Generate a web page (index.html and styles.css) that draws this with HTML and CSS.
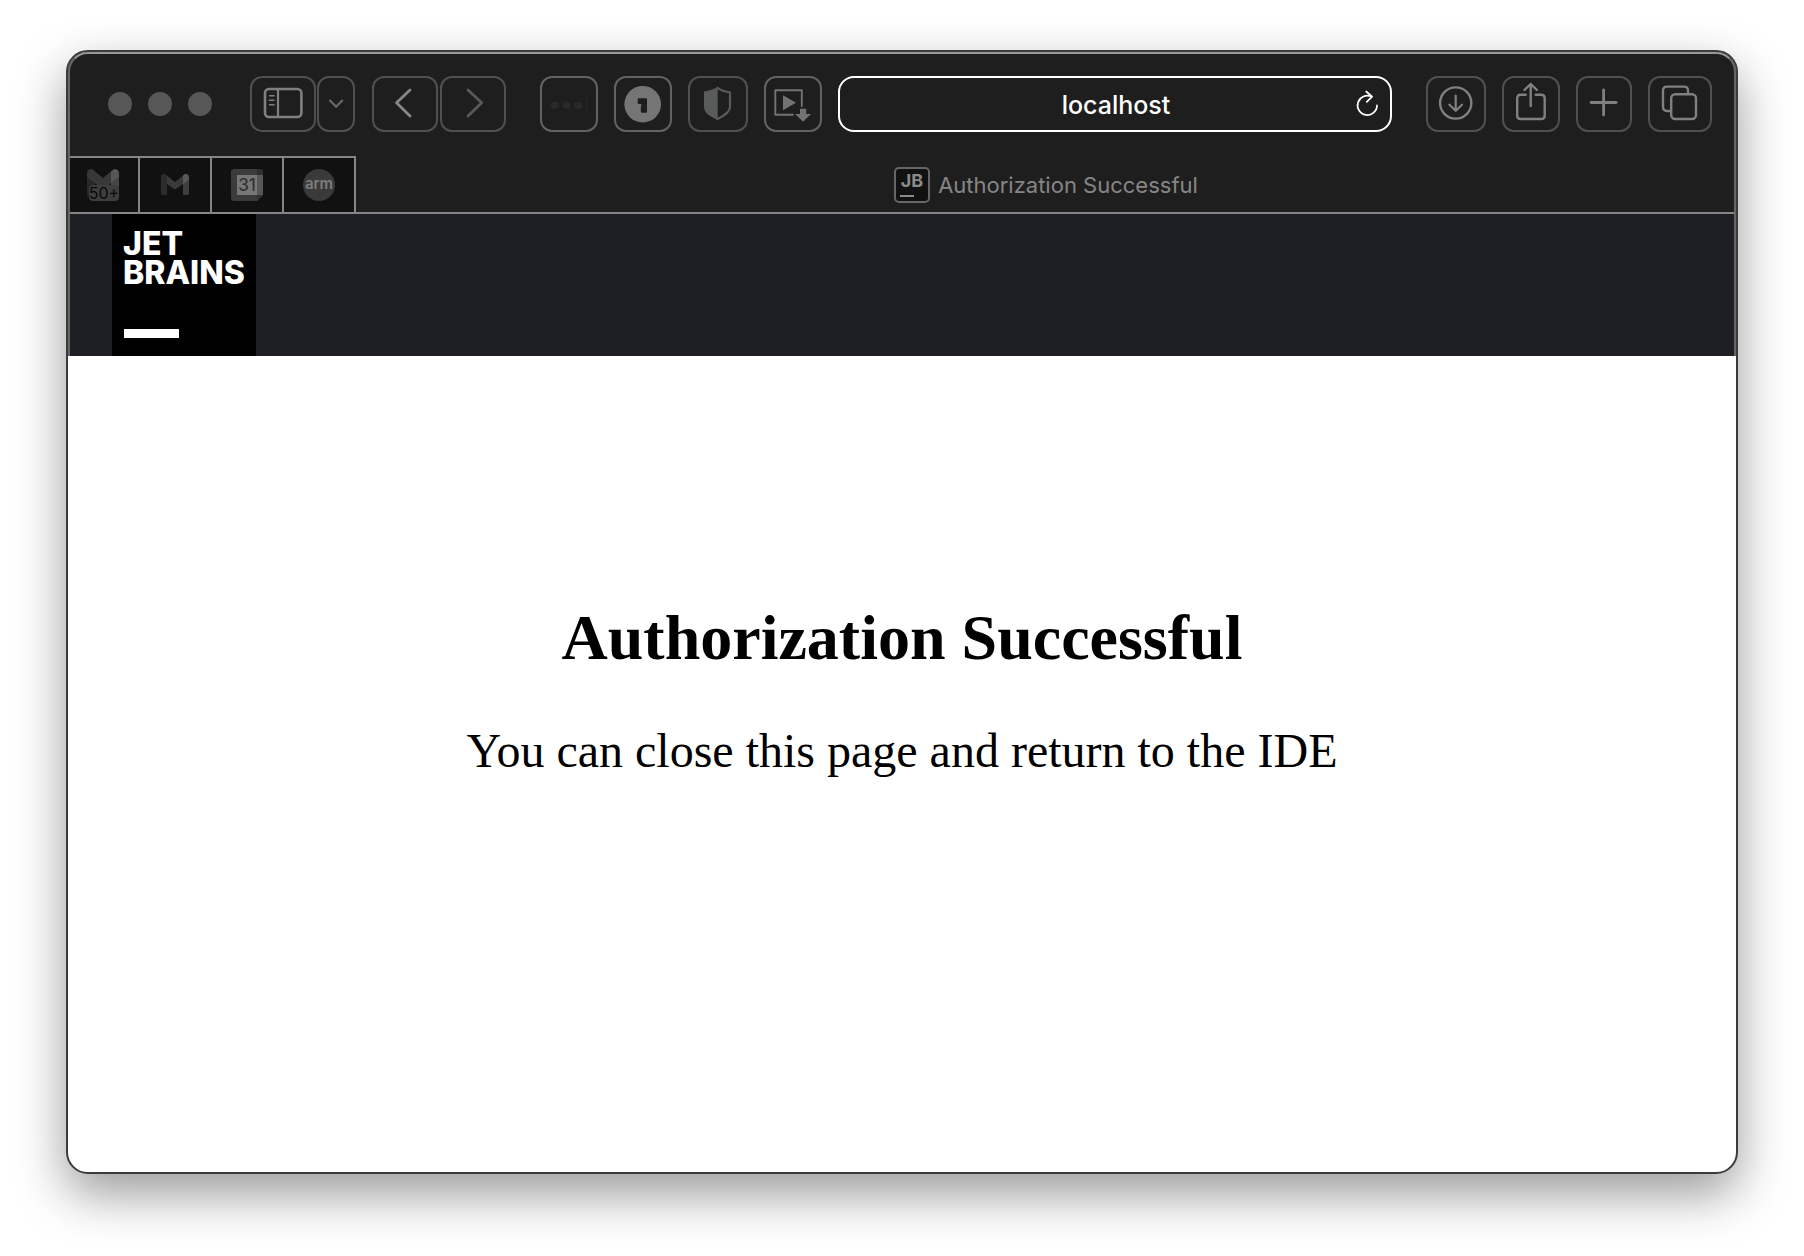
FILE: index.html
```html
<!DOCTYPE html>
<html lang="en">
<head>
<meta charset="utf-8">
<title>Authorization Successful</title>
<link rel="stylesheet" href="styles.css">
</head>
<body>
<div class="window">
  <div class="chrome">
    <div class="toolbar">
      <div class="lights"><span class="light"></span><span class="light"></span><span class="light"></span></div>
      <div class="group group-tight">
        <button class="tool w66" aria-label="Show sidebar"><svg viewBox="2 2 62 52"><rect x="15" y="13" width="36.4" height="28" rx="4" stroke-width="2.6"/><path d="M28 13v28" stroke-width="2.2"/><path d="M19.5 19.7h4.5M19.5 24.2h4.5M19.5 28.7h4.5" stroke-width="1.6"/></svg></button>
        <button class="tool w38" aria-label="Sidebar options"><svg viewBox="2 2 34 52"><path d="M13 24.6l6.1 6.2 6.1-6.2" stroke="#696969" stroke-width="2.2"/></svg></button>
      </div>
      <div class="group group-nav">
        <button class="tool w66" aria-label="Back"><svg viewBox="2 2 62 52"><path d="M38 14L24.5 26.7 38 40" stroke="#878787" stroke-width="2.8"/></svg></button>
        <button class="tool w66" aria-label="Forward"><svg viewBox="2 2 62 52"><path d="M28 14l13.7 12.7L28 40" stroke="#595959" stroke-width="2.8"/></svg></button>
      </div>
      <div class="group group-ext">
        <button class="tool w58 strong" aria-label="Password manager"><svg viewBox="2 2 54 52"><g fill="#292929" stroke="none"><ellipse cx="14.7" cy="29.3" rx="4.3" ry="3.7"/><ellipse cx="26.7" cy="29.3" rx="4.1" ry="3.7"/><ellipse cx="38.3" cy="29.3" rx="4.1" ry="3.7"/></g><path d="M46.7 21v17" stroke="#292929" stroke-width="1"/></svg></button>
        <button class="tool w58 strong" aria-label="1Password"><svg viewBox="2 2 54 52"><circle cx="28.7" cy="28.2" r="18.3" fill="#757575" stroke="none"/><path d="M24.7 22.3h7.3q1 0 1 1v12.4q0 1-1 1h-4.2q-1 0-1-1v-5.2l1-1.2-1-1.2h-2.1q-1 0-1-1v-3.8q0-1 1-1z" fill="#1e1e1e" stroke="none"/></svg></button>
        <button class="tool w60" aria-label="Privacy report"><svg viewBox="2 2 56 52"><path d="M29.7 10.8C26 13.5 21 14.4 16 15.6V31c0 5.5 5 9 13.7 13z" fill="#595a5a" stroke="none"/><path d="M29.5 11.8C33 14.5 38 15.6 42 16.5V31c0 5-5 8.3-12.5 11.9" stroke="#595a5a" stroke-width="2.2"/></svg></button>
        <button class="tool w58 strong" aria-label="Picture in picture"><svg viewBox="2 2 54 52"><path d="M29 38.7H11.3V14.2H37.8V30" stroke="#737373" stroke-width="1.9"/><path d="M19 19.3v15l13-7.5zM36 32.7h6.2V38H47l-7.900 7.800-7.900-7.800H36z" fill="#737373" stroke="none"/></svg></button>
      </div>
      <div class="address">
        <input class="address-input" type="text" value="localhost" aria-label="Address">
        <button class="reload" aria-label="Reload"><svg viewBox="0 0 26 28"><path d="M23 15.3A9.7 9.7 0 1 1 17.5 6.6M12.200 1.5l5.9 5.2-5.3 5.2" stroke="#fff" stroke-width="1.7"/></svg></button>
      </div>
      <div class="group group-end">
        <button class="tool w60" aria-label="Downloads"><svg viewBox="2 2 56 52"><circle cx="29.7" cy="27" r="15.6" stroke-width="2.4"/><path d="M29.7 19.5v15M23.4 28.7l6.3 6.1 6.3-6.1" stroke-width="2.2"/></svg></button>
        <button class="tool w58" aria-label="Share"><svg viewBox="2 2 54 52"><path d="M23.7 18.7h-5q-3.5 0-3.5 3.5v17.300q0 3.500 3.500 3.500h20.500q3.500 0 3.500-3.500V22.200q0-3.500-3.500-3.500h-5.500M28.700 8v22M22.500 14l6.200-6 6.200 6" stroke-width="2.4"/></svg></button>
        <button class="tool w56" aria-label="New tab"><svg viewBox="2 2 52 52"><path d="M27.6 14v25M15.1 26.5h25" stroke-width="2.8"/></svg></button>
        <button class="tool w64" aria-label="Tab overview"><svg viewBox="2 2 60 52"><rect x="23.2" y="18.2" width="24.8" height="24.8" rx="4" stroke-width="2.4"/><path d="M22 35h-3q-4 0-4-4V14.600q0-4 4-4h17q4 0 4 4V17" stroke-width="2.4"/></svg></button>
      </div>
    </div>
    <div class="tabs">
      <button class="pin" aria-label="Gmail, more than 50 unread"><svg viewBox="0 2 70 54"><path d="M19 18v20q0 2 2 2h6V22z" fill="#282828"/><path d="M51 18v20h-8V22z" fill="#474747"/><path d="M19 18q0-5 5-5l11 9 11-9q5 0 5 5v3L35 33.5 19 21z" fill="#383838"/><path d="M43 15.5l3-2.3q5-.5 5 4.8v3l-8 6z" fill="#575757"/><rect x="21" y="29" width="30" height="16" rx="4" fill="#3e3e3e"/><text x="36" y="43" class="t-badge">50+</text></svg></button>
      <button class="pin" aria-label="Gmail"><svg viewBox="0 2 70 54"><path d="M21 20v17q0 2 2 2h4V24z" fill="#2d2d2d"/><path d="M49 20v17q0 2-2 2h-4V24z" fill="#3e3e3e"/><path d="M21 22q0-4 4-4l10 8 10-8q4 0 4 4v2L35 33.500 21 24z" fill="#3a3a3a"/><path d="M43 19.600l2-1.500q4-.3 4 3.900v2l-6 4.600z" fill="#575757"/><path d="M21 22q0-4 4-4l2 1.500v9L21 24z" fill="#2b2b2b"/></svg></button>
      <button class="pin" aria-label="Calendar"><svg viewBox="0 2 70 54"><path d="M22 13h26q3 0 3 3v23l-6 6H22q-3 0-3-3V16q0-3 3-3z" fill="#3b3b3b"/><path d="M45 19h6v20h-6z" fill="#575757"/><path d="M45 13h3q3 0 3 3v3h-6z" fill="#303030"/><path d="M45 39h6l-6 6z" fill="#333"/><path d="M25 19h20v20H25z" fill="#777"/><text x="35" y="35" class="t-date">31</text></svg></button>
      <button class="pin" aria-label="Arm"><svg viewBox="0 2 70 54"><circle cx="35" cy="29" r="16" fill="#3a3a3a"/><text x="35" y="33" class="t-arm">arm</text></svg></button>
      <button class="tab"><svg class="favicon" viewBox="0 0 36 36"><rect x="1" y="1" width="34" height="34" rx="4" fill="#111" stroke="#666" stroke-width="2"/><text x="18" y="20" class="t-jb">JB</text><path d="M6 29h14" stroke="#8a8a8a" stroke-width="2" stroke-linecap="butt"/></svg><span>Authorization Successful</span></button>
    </div>
    <header class="site-header">
      <div class="logo"><span class="logo-text">JET<br>BRAINS</span><span class="logo-bar"></span></div>
    </header>
  </div>
  <main class="page">
    <h1 class="title">Authorization Successful</h1>
    <p class="message">You can close this page and return to the IDE</p>
  </main>
</div>
</body>
</html>
```
FILE: styles.css
```css
* { box-sizing: border-box; }

body {
  margin: 0;
  min-height: 100vh;
  padding: 50px 66px 82px;
  display: flex;
  background: #fff;
  font-family: Inter, "Liberation Sans", sans-serif;
}

button {
  margin: 0;
  padding: 0;
  border: 0;
  background: none;
  font: inherit;
  color: inherit;
}

svg {
  display: block;
  width: 100%;
  height: 100%;
  fill: none;
  stroke-linecap: round;
  stroke-linejoin: round;
}

.window {
  flex: 1;
  display: flex;
  flex-direction: column;
  overflow: hidden;
  border: 2px solid #3a3b3b;
  border-radius: 22px;
  background: #fff;
  box-shadow: 0 20px 50px rgba(0, 0, 0, 0.4);
}

.chrome {
  position: relative;
  background: #1e1e1e;
}

/* light inner edge of the window frame */
.chrome::after {
  content: "";
  position: absolute;
  inset: 0;
  border: 2px solid #666;
  border-top-color: #999;
  border-bottom: 0;
  border-radius: 20px 20px 0 0;
  pointer-events: none;
}

.toolbar {
  display: flex;
  align-items: center;
  padding: 24px 24px 24px 40px;
}

.lights { display: flex; gap: 16px; margin-right: 38px; }
.light { width: 24px; height: 24px; border-radius: 50%; background: #575757; }

.group { display: flex; gap: 16px; }
.group-tight { gap: 1px; margin-right: 17px; }
.group-nav { gap: 2px; margin-right: 34px; }
.group-ext { margin-right: 16px; }
.group-end { margin-left: 34px; }

.tool {
  height: 56px;
  border: 2px solid #505050;
  border-radius: 12px;
}
.tool svg { stroke: #808080; }
.strong { border-color: #626262; }
.w38 { width: 38px; }
.w56 { width: 56px; }
.w58 { width: 58px; }
.w60 { width: 60px; }
.w64 { width: 64px; }
.w66 { width: 66px; }

.address {
  flex: 1;
  display: flex;
  align-items: center;
  height: 56px;
  padding: 0 10px 0 38px;
  border: 2px solid #fff;
  border-radius: 16px;
}
.address-input {
  flex: 1;
  min-width: 0;
  height: 52px;
  padding: 2px 0 0;
  border: 0;
  outline: 0;
  background: none;
  color: #fff;
  font: 500 25px Inter, "Liberation Sans", sans-serif;
  text-align: center;
}
.reload { width: 26px; height: 28px; }

.tabs {
  display: flex;
  height: 58px;
  border-bottom: 2px solid #858585;
}
.pin {
  width: 72px;
  border: solid #858585;
  border-width: 2px 2px 0 0;
  background: #111;
}
.tab {
  flex: 1;
  display: flex;
  align-items: center;
  justify-content: center;
  gap: 8px;
  padding-top: 2px;
  color: #868686;
  font-size: 22px;
}
.favicon { width: 36px; height: 36px; }

.t-badge { font-size: 16px; fill: #080808; text-anchor: middle; }
.t-date { font-size: 17px; font-weight: 500; fill: #333; text-anchor: middle; }
.t-arm { font-size: 15px; font-weight: 600; fill: #7d7d7d; text-anchor: middle; }
.t-jb { font-size: 18px; font-weight: 700; fill: #8a8a8a; text-anchor: middle; }

.site-header {
  padding-left: 44px;
  background: #1e1f24;
}
.logo {
  display: flex;
  flex-direction: column;
  justify-content: space-between;
  align-items: flex-start;
  width: 144px;
  height: 142px;
  padding: 15px 11px 18px;
  background: #000;
  color: #fff;
}
.logo-text {
  font-size: 32px;
  font-weight: 800;
  line-height: 29px;
}
.logo-bar {
  width: 55px;
  height: 9px;
  margin-left: 1px;
  background: #fff;
}

.page {
  flex: 1;
  display: flex;
  flex-direction: column;
  align-items: center;
  justify-content: center;
  gap: 48px;
  padding-bottom: 148px;
  color: #000;
  font-family: "Liberation Serif", "Times New Roman", serif;
  text-align: center;
}
.title { margin: 0; font-size: 64px; line-height: 74px; }
.message { margin: 0; font-size: 48px; line-height: 56px; }
```
